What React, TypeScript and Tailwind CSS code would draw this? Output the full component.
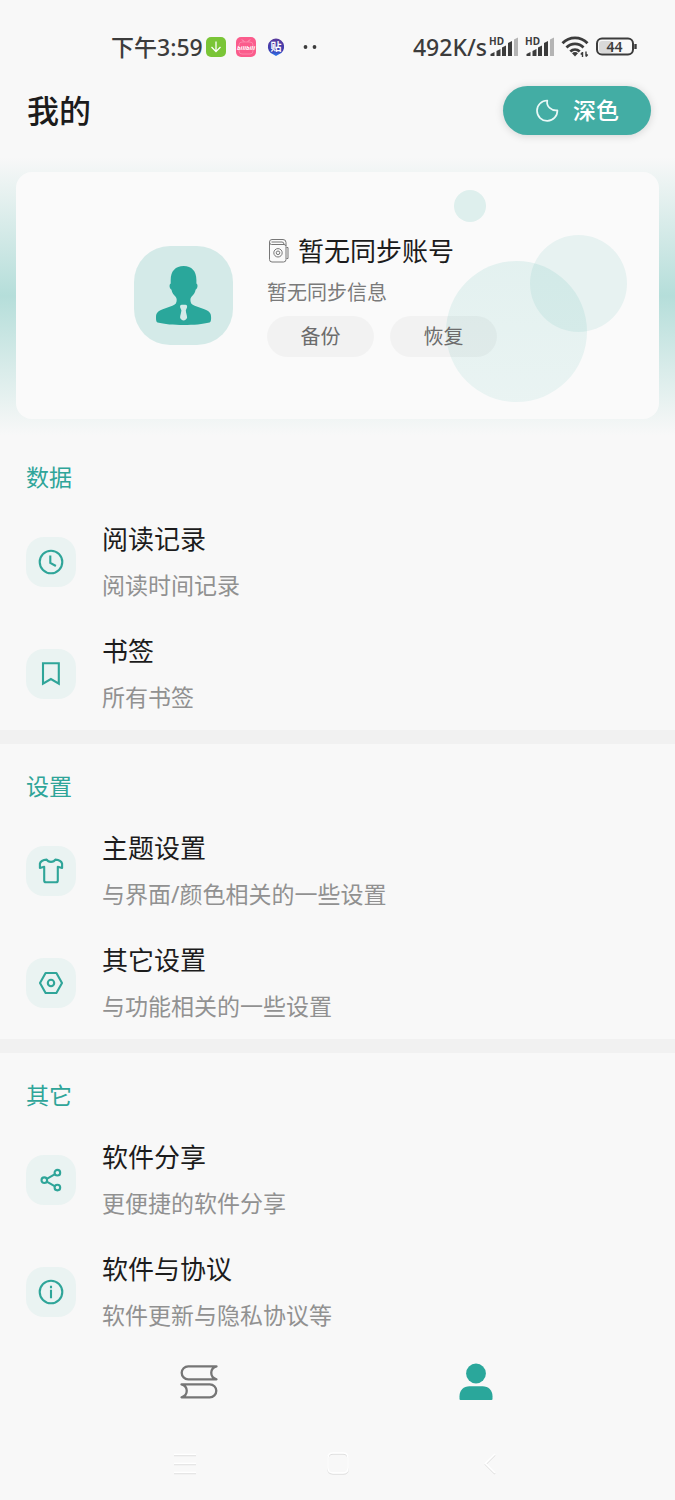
import type { ReactNode } from 'react';

interface MenuItem {
  title: string;
  desc: string;
  icon: ReactNode;
}

interface MenuGroup {
  label: string;
  items: MenuItem[];
}

function LineIcon({ children }: { children: ReactNode }) {
  return (
    <svg
      className="h-[26px] w-[26px]"
      viewBox="0 0 26 26"
      fill="none"
      stroke="currentColor"
      strokeWidth="2.1"
      aria-hidden="true"
    >
      {children}
    </svg>
  );
}

const groups: MenuGroup[] = [
  {
    label: '数据',
    items: [
      {
        title: '阅读记录',
        desc: '阅读时间记录',
        icon: (
          <LineIcon>
            <circle cx="13" cy="13" r="11.3" />
            <path d="M12.3 6.5v7.3l5.6 3.2" />
          </LineIcon>
        ),
      },
      {
        title: '书签',
        desc: '所有书签',
        icon: (
          <LineIcon>
            <path d="M5 2.3h15.8v20.3L12.9 18 5 22.6Z" />
          </LineIcon>
        ),
      },
    ],
  },
  {
    label: '设置',
    items: [
      {
        title: '主题设置',
        desc: '与界面/颜色相关的一些设置',
        icon: (
          <LineIcon>
            <path
              d="M8.6 1.6C9.4 3.1 11 3.9 13 3.9s3.6-.8 4.4-2.3c3.400.2 6 1.600 6.700 4V10L19.800 8.800V22.500q0 1.800-1.800 1.800H8q-1.800 0-1.800-1.800V8.800L1.900 10V5.600c.7-2.400 3.300-3.800 6.700-4Z"
              strokeLinejoin="round"
            />
          </LineIcon>
        ),
      },
      {
        title: '其它设置',
        desc: '与功能相关的一些设置',
        icon: (
          <LineIcon>
            <path d="M7.6 3h10.8L24 13l-5.6 10H7.6L2 13Z" strokeLinejoin="round" />
            <circle cx="13" cy="13" r="3.2" />
          </LineIcon>
        ),
      },
    ],
  },
  {
    label: '其它',
    items: [
      {
        title: '软件分享',
        desc: '更便捷的软件分享',
        icon: (
          <LineIcon>
            <circle cx="19.4" cy="5.7" r="2.8" />
            <circle cx="6.3" cy="13.2" r="2.8" />
            <circle cx="19.4" cy="20.6" r="2.8" />
            <path d="m8.8 11.8 8.2-4.7M8.8 14.7l8.2 4.6" />
          </LineIcon>
        ),
      },
      {
        title: '软件与协议',
        desc: '软件更新与隐私协议等',
        icon: (
          <LineIcon>
            <circle cx="13" cy="13" r="11.3" />
            <path d="M13 10.8v8.4M13 6.8v2.4" />
          </LineIcon>
        ),
      },
    ],
  },
];

function Signal() {
  return (
    <svg className="h-6 w-[30px]" viewBox="0 0 30 24" aria-hidden="true">
      <text x="0" y="10" fontSize="10" fontWeight="700" fill="#3c3c3c">
        HD
      </text>
      <g fill="#3c3c3c">
        <path d="M1.500 21v-2l4-2v4Z" />
        <path d="M7.500 21v-5l4-2v7Z" />
        <path d="M13 21v-8.500l4-2V21Z" />
        <path d="M19 21V8l4-2v15Z" />
        <path d="M25 21V4.500l4-2V21Z" fill="#b4b4b4" />
      </g>
    </svg>
  );
}

function StatusBar() {
  return (
    <div className="flex h-12 items-center justify-between pr-[38px] pl-[111px] text-[#3c3c3c]">
      <div className="flex items-center gap-[10px]">
        <span className="-mr-[7px] text-[23px] leading-8 font-medium">下午3:59</span>
        <svg className="h-5 w-5" viewBox="0 0 20 20" aria-hidden="true">
          <rect width="20" height="20" rx="5" fill="#7ac537" />
          <path d="M10 4.500v10M5.500 10l4.500 4.600L14.500 10" fill="none" stroke="#fff" strokeWidth="1.300" />
        </svg>
        <svg className="h-5 w-5" viewBox="0 0 20 20" aria-hidden="true">
          <rect width="20" height="20" rx="5" fill="#fb5c8c" />
          <path d="m6 2.500 2.500 2.500M14 2.500 11.500 5" stroke="#fda9c3" strokeWidth="1" />
          <rect x="3" y="5" width="14" height="12" rx="3" fill="none" stroke="#fc86aa" />
          <text x="10" y="13" fontSize="6" fontWeight="700" fontStyle="italic" fill="#fff" textAnchor="middle">
            bilibili
          </text>
        </svg>
        <svg className="h-5 w-5" viewBox="0 0 20 20" aria-hidden="true">
          <defs>
            <linearGradient id="tie" x1="0" y1="0" x2="0" y2="1">
              <stop offset="0" stopColor="#5a3b9c" />
              <stop offset=".7" stopColor="#3b3fb4" />
              <stop offset="1" stopColor="#2f7df0" />
            </linearGradient>
          </defs>
          <path d="M10 1.500a8.200 8.200 0 0 1 3 15.800L10 19l-3-1.700a8.200 8.200 0 0 1 3-15.800Z" fill="url(#tie)" />
          <text x="10" y="13.500" fontSize="11" fontWeight="700" fill="#fff" textAnchor="middle">
            贴
          </text>
        </svg>
        <svg className="ml-1 h-5 w-5" viewBox="0 0 20 20" fill="#3c3c3c" aria-hidden="true">
          <circle cx="5.500" cy="10" r="1.900" />
          <circle cx="14.500" cy="10" r="1.900" />
        </svg>
      </div>
      <div className="flex items-center gap-[6px]">
        <span className="-mr-1 text-[23px] leading-8 font-medium">492K/s</span>
        <Signal />
        <Signal />
        <svg className="h-[22px] w-[28px]" viewBox="0 0 28 22" fill="none" stroke="#3c3c3c" strokeWidth="2.800" aria-hidden="true">
          <path d="M1.500 7.300C8.500 0 19.500 0 26.500 7.300" />
          <path d="M5.500 11.500c4.800-4.800 12.200-4.800 17 0" />
          <path d="M9.300 15.500c2.700-2.500 6.700-2.500 9.400 0" />
          <path d="m14 20.500-3-3.300c1.800-1.500 4.200-1.500 6 0Z" fill="#3c3c3c" stroke="none" />
          <path d="M21.500 21v-5M25 15.500v5M19.800 18.500l1.700-2M26.700 18.500l-1.700 2" strokeWidth="1.400" />
        </svg>
        <svg className="h-[20px] w-[42px]" viewBox="0 0 42 20" aria-hidden="true">
          <rect x="4" y="4" width="14" height="12" rx="3" fill="#d9d9d9" />
          <rect x="2" y="1.500" width="36" height="16" rx="5" fill="none" stroke="#3c3c3c" strokeWidth="2" />
          <path d="M40.500 7v5" stroke="#3c3c3c" strokeWidth="2.400" />
          <text x="19.500" y="14.500" fontSize="14" fontWeight="600" fill="#3c3c3c" textAnchor="middle">
            44
          </text>
        </svg>
      </div>
    </div>
  );
}

function Header() {
  return (
    <header className="flex items-center justify-between pr-6 pl-[27px]">
      <h1 className="text-[32px] leading-[48px] font-medium">我的</h1>
      <button
        type="button"
        className="flex h-[49px] items-center gap-[14px] rounded-full bg-[#43ada4] px-8 text-[23px] font-medium text-white shadow-[0_1px_8px_rgba(0,0,0,0.15)]"
      >
        <svg className="h-6 w-6" viewBox="0 0 24 24" fill="none" stroke="#e9f9f7" strokeWidth="1.700" strokeLinejoin="round" aria-hidden="true">
          <path d="M12.300 1.500a10.200 10.200 0 1 0 10.100 9.800C16.500 12.100 11 7.500 12.300 1.500Z" />
        </svg>
        深色
      </button>
    </header>
  );
}

function AccountCard() {
  return (
    <section className="bg-linear-to-b from-[#f8f8f8] via-[#b5deda] to-[#f8f8f8] px-4 pt-[15px] pb-4">
      <div className="relative flex min-h-[247px] items-center gap-[34px] overflow-hidden rounded-[16px] bg-[#fafafa] pl-[118px]">
        <div className="absolute top-[18px] right-[173px] h-8 w-8 rounded-full bg-[#2aa79b]/13" />
        <div className="absolute top-[63px] right-8 h-[97px] w-[97px] rounded-full bg-[#2aa79b]/9" />
        <div className="absolute top-[89px] right-[72px] h-[141px] w-[141px] rounded-full bg-linear-to-b from-[#2aa79b]/11 to-[#2aa79b]/8" />

        <div className="relative h-[99px] w-[99px] shrink-0 rounded-[36px] bg-[#d4eae8]">
          <svg className="h-[99px] w-[99px]" viewBox="0 0 99 99" aria-hidden="true">
            <path
              d="M49.700 20C41.500 20 36.700 25 36.700 34v3.500c-1.600.8-1.600 4.800.8 6.200.6 2.800 1.600 4.500 3.200 6 1.400 1.300 2 2.500 2 4.300 0 3.200-1.300 4.600-4.300 5.800l-9 3.200C24 65 22 66.500 22 71.500c0 2.800.2 4.500 1.600 5C30 78.200 40 79 49.700 79s19.400-.8 25.800-2.500c1.400-.5 1.600-2.200 1.600-5 0-5-2-6.500-7.400-8.500l-9-3.200c-3-1.200-4.300-2.600-4.300-5.800 0-1.800.6-3 2-4.300 1.600-1.500 2.600-3.200 3.200-6 2.400-1.400 2.400-5.400.8-6.200V34c0-9-4.800-14-12.700-14Z"
              fill="#2aa79b"
            />
            <path
              d="M47.800 58.800h3.600c1.500 0 2 1.400 1.600 2.700l-1.200 2.700c0 2.400 1.300 5 1.300 7.300 0 1.200-2.200 3-3.500 3s-3.500-1.800-3.500-3c0-2.300 1.300-4.900 1.300-7.300l-1.200-2.700c-.4-1.300.1-2.700 1.600-2.700Z"
              fill="#d4eae8"
            />
          </svg>
        </div>

        <div className="relative">
          <h2 className="flex items-center gap-[9px] text-[26px] leading-8">
            <svg className="h-[26px] w-[22px]" viewBox="0 0 22 26" fill="none" stroke="#777" strokeWidth="1" aria-hidden="true">
              <path d="M2.500 4V21.500q0 2.500 2.500 2.500H16.500q2.500 0 2.500-2.500V8.500q0-2-2-2H4.500q-2 0-2-2.500t2.500-2.500H16q3 0 3 3V8" />
              <path d="M4.500 4H15q2 0 2 2.500M19.500 9.500h1.500v11h-1.500" />
              <circle cx="11" cy="14.800" r="4.200" />
              <circle cx="11" cy="14.800" r="1.800" />
            </svg>
            暂无同步账号
          </h2>
          <p className="mt-[13px] text-[20px] leading-[26px] text-[#7a7a7a]">暂无同步信息</p>
          <div className="mt-[10px] flex gap-4 text-[20px] text-[#6c6c6c]">
            <button type="button" className="h-[41px] w-[107px] rounded-full bg-black/3 pt-[2px]">
              备份
            </button>
            <button type="button" className="h-[41px] w-[107px] rounded-full bg-black/3 pt-[2px]">
              恢复
            </button>
          </div>
        </div>
      </div>
    </section>
  );
}

function Group({ label, items }: MenuGroup) {
  return (
    <section>
      <h2 className="px-[26px] pt-[26px] pb-[13px] text-[23px] leading-8 text-[#2fa599]">{label}</h2>
      {items.map((item) => (
        <a key={item.title} href="#" className="flex h-28 items-center gap-[26px] px-[26px]">
          <span className="flex h-[50px] w-[50px] shrink-0 items-center justify-center rounded-[18px] bg-[#eaf3f2] text-[#2fa599]">
            {item.icon}
          </span>
          <span className="flex flex-col gap-[14px]">
            <span className="text-[26px] leading-8">{item.title}</span>
            <span className="text-[23px] leading-8 text-[#919191]">{item.desc}</span>
          </span>
        </a>
      ))}
    </section>
  );
}

function TabBar() {
  return (
    <nav className="grid h-[68px] grid-cols-2 px-[61px]">
      <a href="#" aria-label="书架" className="flex items-center justify-center">
        <svg className="h-9 w-[38px]" viewBox="0 0 38 36" fill="none" stroke="#757575" strokeWidth="2.300" strokeLinejoin="round" aria-hidden="true">
          <path d="M36.500 2.300H8.200a6.400 6.400 0 0 0 0 13H36.500c-7-2-7-11 0-13Z" />
          <path d="M1.500 20.300H29.800a6.400 6.400 0 0 1 0 13H1.500c7-2 7-11 0-13Z" />
        </svg>
      </a>
      <a href="#" aria-label="我的" aria-current="page" className="flex items-center justify-center">
        <svg className="h-[38px] w-[34px]" viewBox="0 0 34 38" fill="#2aa79b" aria-hidden="true">
          <circle cx="17" cy="10.500" r="9.900" />
          <path d="M10.500 23.300h13c6 0 10 4 10 10v2.700q0 1-1 1h-31q-1 0-1-1v-2.700c0-6 4-10 10-10Z" />
        </svg>
      </a>
    </nav>
  );
}

function SystemKeys() {
  const keys = [
    { name: '最近任务', d: 'M2 4.500h22M2 13.500h22M2 22.500h22' },
    { name: '主屏幕', d: 'M8 3h10q5 0 5 5v10q0 5-5 5H8q-5 0-5-5V8q0-5 5-5Z' },
    { name: '返回', d: 'm17 4-9.500 9.500L17 23' },
  ];

  return (
    <div className="mt-[10px] grid h-[74px] grid-cols-3 px-[108px]">
      {keys.map((key) => (
        <button key={key.name} type="button" aria-label={key.name} className="flex items-center justify-center">
          <svg className="h-[27px] w-[26px]" viewBox="0 0 26 27" fill="none" strokeWidth="1.600" aria-hidden="true">
            {/* the shade sits one pixel under the white stroke */}
            <path d={key.d} stroke="#dedede" transform="translate(0 1)" />
            <path d={key.d} stroke="#fff" />
          </svg>
        </button>
      ))}
    </div>
  );
}

export default function App() {
  return (
    <div className="min-h-screen bg-[#f8f8f8] pt-[23px] font-['Noto_Sans','Noto_Sans_CJK_SC',sans-serif] text-[#1c1c1c]">
      <StatusBar />
      <div className="mt-[15px] mb-[22px]">
        <Header />
      </div>
      <AccountCard />
      <main className="divide-y-14 divide-[#f1f1f1]">
        {groups.map((group) => (
          <Group key={group.label} label={group.label} items={group.items} />
        ))}
      </main>
      <TabBar />
      <SystemKeys />
    </div>
  );
}
